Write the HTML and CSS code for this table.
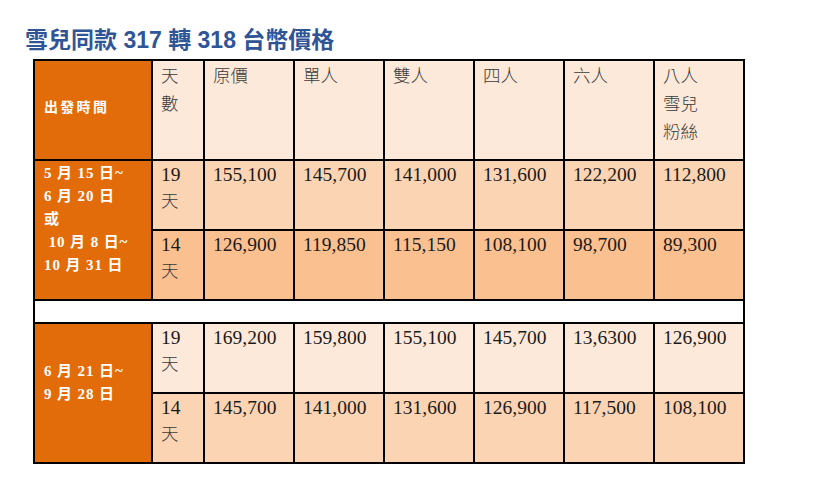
FILE: index.html
```html
<!DOCTYPE html>
<html lang="zh-Hant">
<head>
<meta charset="utf-8">
<title>雪兒同款 317 轉 318 台幣價格</title>
<link rel="stylesheet" href="styles.css">
</head>
<body>
<h1 class="title">雪兒同款 317 轉 318 台幣價格</h1>
<table class="price">
  <colgroup>
    <col class="c-date"><col class="c-day"><col class="c-p"><col class="c-p"><col class="c-p"><col class="c-p"><col class="c-p"><col class="c-p">
  </colgroup>
  <tr class="head">
    <th class="date head-date">出發時間</th>
    <td class="cjk">天<br>數</td>
    <td class="cjk">原價</td>
    <td class="cjk">單人</td>
    <td class="cjk">雙人</td>
    <td class="cjk">四人</td>
    <td class="cjk">六人</td>
    <td class="cjk">八人<br>雪兒<br>粉絲</td>
  </tr>
  <tr class="r b1a">
    <th class="date" rowspan="2">5 月 15 日~<br>6 月 20 日<br>或<br>&nbsp;10 月 8 日~<br>10 月 31 日</th>
    <td class="day">19<br><span class="cjk">天</span></td>
    <td>155,100</td><td>145,700</td><td>141,000</td><td>131,600</td><td>122,200</td><td>112,800</td>
  </tr>
  <tr class="r b1b">
    <td class="day">14<br><span class="cjk">天</span></td>
    <td>126,900</td><td>119,850</td><td>115,150</td><td>108,100</td><td>98,700</td><td>89,300</td>
  </tr>
  <tr class="gap"><td colspan="8"></td></tr>
  <tr class="r b2a">
    <th class="date date2" rowspan="2">6 月 21 日~<br>9 月 28 日</th>
    <td class="day">19<br><span class="cjk">天</span></td>
    <td>169,200</td><td>159,800</td><td>155,100</td><td>145,700</td><td>13,6300</td><td>126,900</td>
  </tr>
  <tr class="r b2b">
    <td class="day">14<br><span class="cjk">天</span></td>
    <td>145,700</td><td>141,000</td><td>131,600</td><td>126,900</td><td>117,500</td><td>108,100</td>
  </tr>
</table>
</body>
</html>
```
FILE: styles.css
```css
html, body {
  margin: 0;
  padding: 0;
  background: #ffffff;
}

.title {
  margin: 0;
  padding: 25px 0 0 25px;
  height: 34px;
  font-family: "Liberation Sans", "Noto Sans CJK TC", sans-serif;
  font-size: 23px;
  line-height: 30px;
  font-weight: bold;
  color: #2f5597;
}

.price {
  margin-left: 33px;
  border-collapse: collapse;
  table-layout: fixed;
  width: 712px;
  font-family: "Liberation Serif", "Noto Sans CJK TC", serif;
  font-size: 19.5px;
  line-height: 26px;
  color: #1a1a1a;
}

.c-date { width: 118px; }
.c-day { width: 52px; }
.c-p { width: 90px; }

.price th,
.price td {
  border: 2px solid #000000;
  padding: 1px 8px 0 8px;
  vertical-align: top;
  text-align: left;
}

.cjk {
  font-family: "Noto Sans CJK TC", sans-serif;
  font-weight: 300;
  font-size: 17.5px;
  line-height: 28px;
  color: #3a3a3a;
}

.head td { background: #fde9d9; }
.head { height: 100px; }
.head td.cjk { padding-top: 0; }

.r { height: 70px; }
.b1a td { background: #fbd4b4; }
.b1b td { background: #fac090; }
.b2a td { background: #fde9d9; }
.b2b td { background: #fbd4b4; }

.day .cjk { line-height: 24px; }

.gap { height: 23px; }
.gap td { background: #ffffff; padding: 0; }

.price th.date {
  background: #e36c0a;
  color: #ffffff;
  font-family: "Liberation Serif", "Noto Sans CJK TC", serif;
  font-weight: bold;
  font-size: 15px;
  line-height: 23px;
  padding: 1px 4px 0 9px;
  letter-spacing: 0.9px;
}

.price th.head-date {
  vertical-align: middle;
  font-size: 14px;
  letter-spacing: 2.3px;
  padding-bottom: 6px;
}

.price th.date2 {
  vertical-align: middle;
  padding-bottom: 22px;
}
```
